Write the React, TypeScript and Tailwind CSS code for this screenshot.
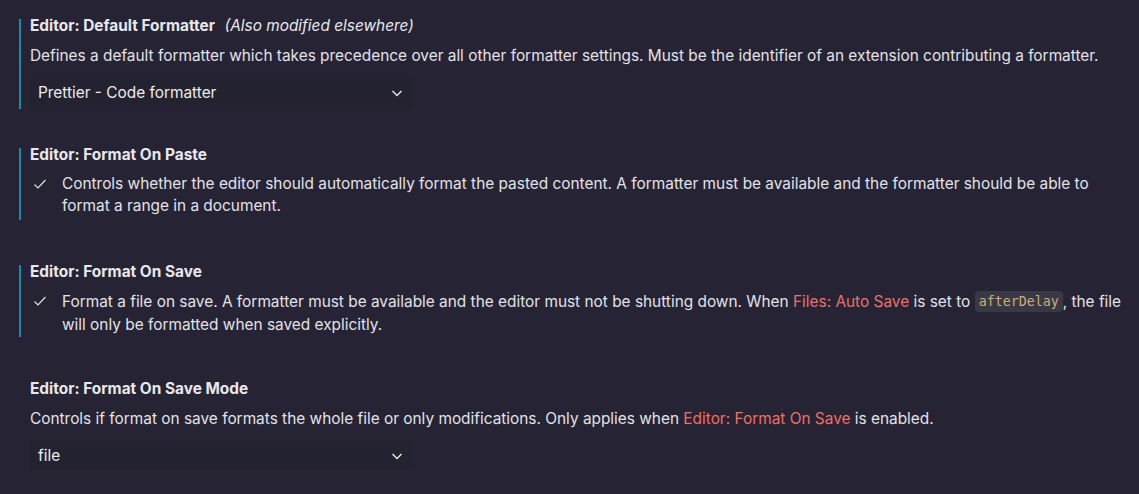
import React from "react";

const font = { fontFamily: "Inter, 'Noto Sans', sans-serif" };

function Chevron() {
  return (
    <svg width="16" height="16" viewBox="0 0 16 16" fill="none" className="text-[#e6e6e6]">
      <path d="M3.5 6l4.5 4.5L12.5 6" stroke="currentColor" strokeWidth="1.5" />
    </svg>
  );
}

function Check() {
  return (
    <div className="w-[20px] h-[20px] mt-[1px] flex items-center justify-center rounded-[3px] bg-[#252433] shrink-0">
      <svg width="16" height="16" viewBox="0 0 16 16" fill="none">
        <path d="M2.5 8.5l3.5 3.5 7.5-8" stroke="#e0e0e0" strokeWidth="1.2" />
      </svg>
    </div>
  );
}

function Select({ value }: { value: string }) {
  return (
    <div className="mt-[11px] w-[382px] h-[29px] bg-[#232231] flex items-center justify-between pl-[8px] pr-[7px] text-[15.4px] text-[#ececec]">
      <span>{value}</span>
      <Chevron />
    </div>
  );
}

export default function App() {
  return (
    <div className="w-[1139px] h-[494px] bg-[#262335] overflow-hidden text-[#e2e2e6]" style={font}>
      <div className="pl-[19px] pt-[19px] w-[1128px]">
        {/* Section 1 */}
        <div className="border-l-2 border-[#1b8aa6] pl-[9px] h-[90px]">
          <div className="text-[15.4px] leading-[14px] font-bold text-[#e8e8ec] whitespace-nowrap">
            Editor: Default Formatter <span className="font-normal italic ml-[6px]">(Also modified elsewhere)</span>
          </div>
          <div className="mt-[12px] text-[15.4px] leading-[22px] whitespace-nowrap">
            Defines a default formatter which takes precedence over all other formatter settings. Must be the identifier of an extension contributing a formatter.
          </div>
          <Select value="Prettier - Code formatter" />
        </div>

        {/* Section 2 */}
        <div className="mt-[39px] border-l-2 border-[#1b8aa6] pl-[9px] h-[72px]">
          <div className="text-[15.4px] leading-[14px] font-bold text-[#e8e8ec]">Editor: Format On Paste</div>
          <div className="mt-[11px] flex gap-[12px]">
            <Check />
            <div className="text-[15.4px] leading-[22px]">
              Controls whether the editor should automatically format the pasted content. A formatter must be available and the formatter should be able to format a range in a document.
            </div>
          </div>
        </div>

        {/* Section 3 */}
        <div className="mt-[45px] border-l-2 border-[#1b8aa6] pl-[9px] h-[72px]">
          <div className="text-[15.4px] leading-[14px] font-bold text-[#e8e8ec]">Editor: Format On Save</div>
          <div className="mt-[11px] flex gap-[12px]">
            <Check />
            <div className="text-[15.4px] leading-[23px]">
              Format a file on save. A formatter must be available and the editor must not be shutting down. When{" "}
              <span className="text-[#ec7068]">Files: Auto Save</span> is set to{" "}
              <code
                className="inline-block bg-[#393847] text-[#c9ae78] rounded-[4px] px-[4px] leading-[21px] text-[13.3px] align-[1px]"
                style={{ fontFamily: "'DejaVu Sans Mono', monospace" }}
              >
                afterDelay
              </code>
              , the file will only be formatted when saved explicitly.
            </div>
          </div>
        </div>

        {/* Section 4 */}
        <div className="mt-[45px] pl-[11px]">
          <div className="text-[15.4px] leading-[14px] font-bold text-[#e8e8ec]">Editor: Format On Save Mode</div>
          <div className="mt-[12px] text-[15.4px] leading-[22px]">
            Controls if format on save formats the whole file or only modifications. Only applies when{" "}
            <span className="text-[#ec7068]">Editor: Format On Save</span> is enabled.
          </div>
          <Select value="file" />
        </div>
      </div>
    </div>
  );
}
